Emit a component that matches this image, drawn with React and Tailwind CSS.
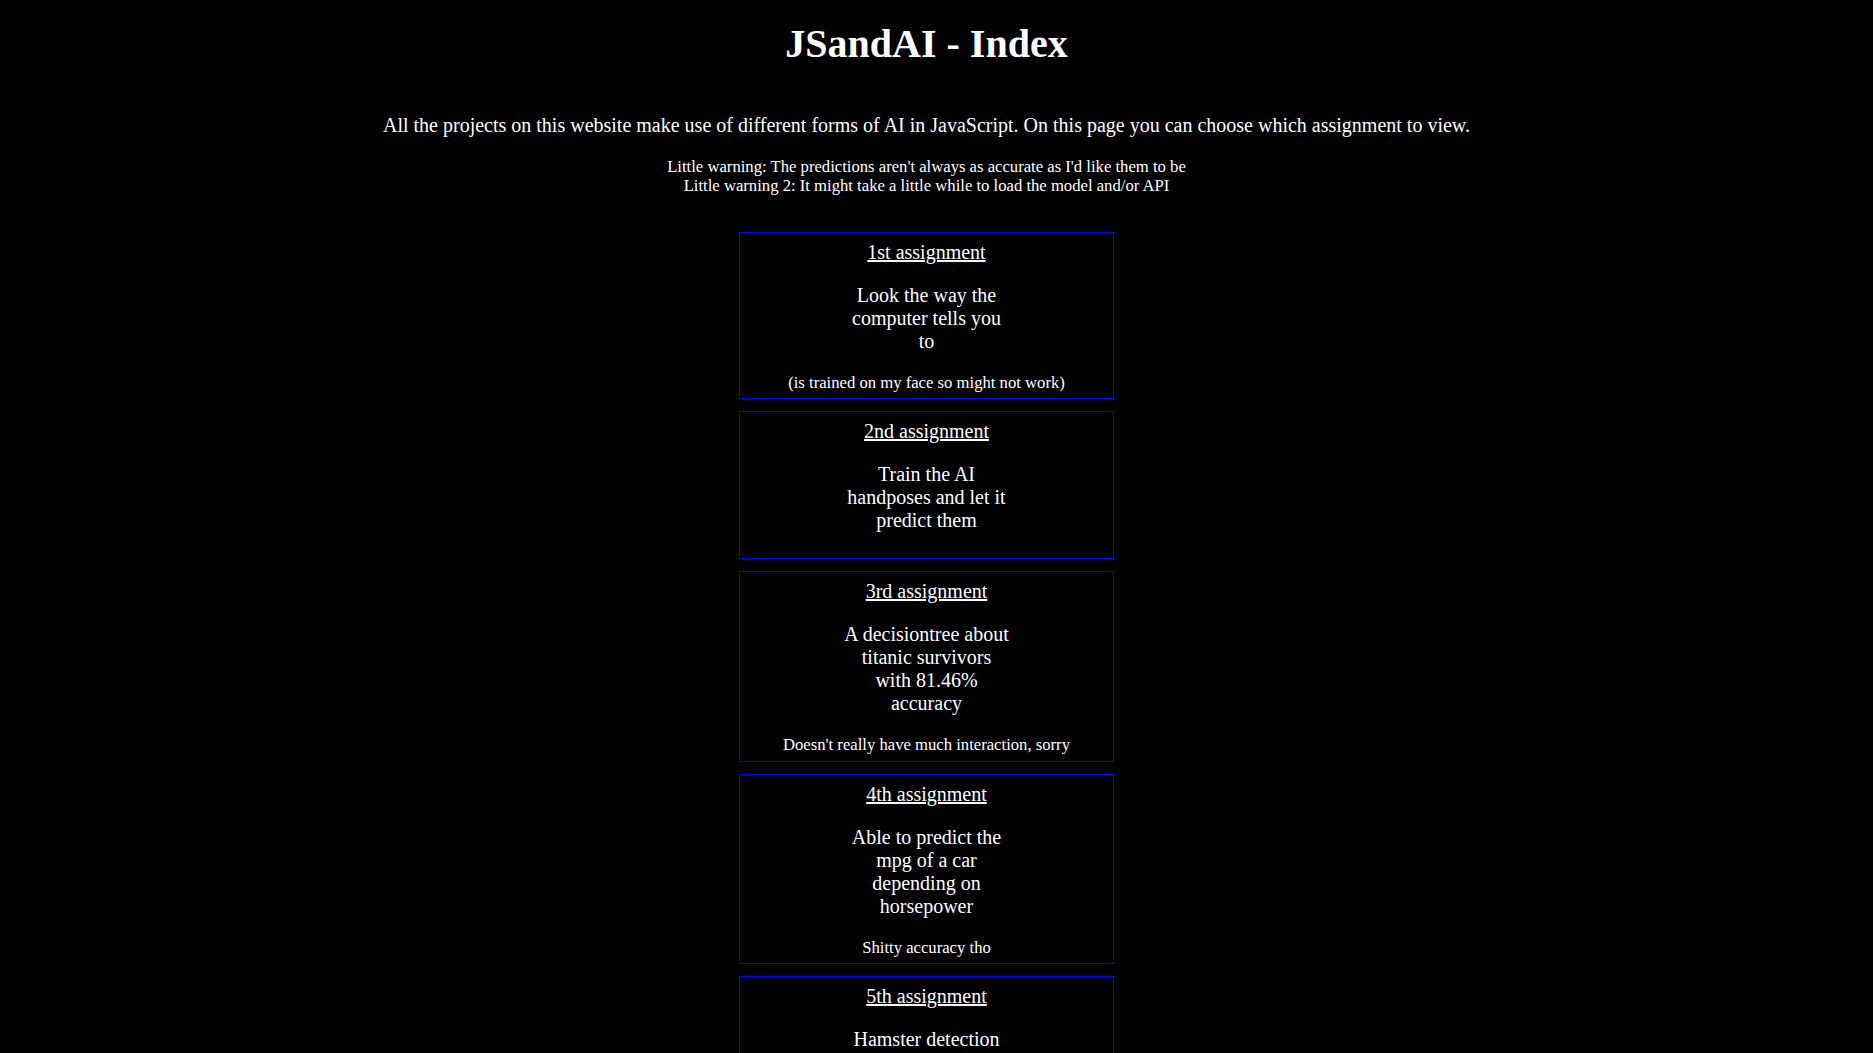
const assignments = [
  {
    title: '1st assignment',
    desc: 'Look the way the computer tells you to',
    note: '(is trained on my face so might not work)',
  },
  {
    title: '2nd assignment',
    desc: 'Train the AI handposes and let it predict them',
  },
  {
    title: '3rd assignment',
    desc: 'A decisiontree about titanic survivors with 81.46% accuracy',
    note: "Doesn't really have much interaction, sorry",
  },
  {
    title: '4th assignment',
    desc: 'Able to predict the mpg of a car depending on horsepower',
    note: 'Shitty accuracy tho',
  },
  {
    title: '5th assignment',
    desc: 'Hamster detection',
  },
];

export default function App() {
  return (
    <div className="min-h-screen bg-black text-white pr-[20px] font-['Liberation_Serif','Times_New_Roman',serif]">
      <div className="flex flex-col items-center text-center pb-10">
        <h1 className="mt-[21px] text-[40px] font-bold leading-[46px]">JSandAI - Index</h1>

        <p className="mt-[47px] text-[20px] leading-[23px]">
          All the projects on this website make use of different forms of AI in JavaScript. On this page you can choose which assignment to view.
        </p>

        <p className="mt-[20px] text-[16.67px] leading-[19.15px]">
          Little warning: The predictions aren't always as accurate as I'd like them to be
          <br />
          Little warning 2: It might take a little while to load the model and/or API
        </p>

        {/* assignment cards */}
        <div className="mt-[37px] w-[375px] flex flex-col gap-[12px]">
          {assignments.map((a) => (
            <div key={a.title} className="border border-[#0000ff] px-2 pt-[8px] pb-[6px] flex flex-col items-center">
              <a href="#" className="text-[20px] leading-[23px] underline text-white">
                {a.title}
              </a>
              <p className="my-[20px] w-[166px] text-[20px] leading-[23px]">{a.desc}</p>
              {a.note && <p className="text-[16.67px] leading-[19.15px]">{a.note}</p>}
            </div>
          ))}
        </div>
      </div>
    </div>
  );
}
